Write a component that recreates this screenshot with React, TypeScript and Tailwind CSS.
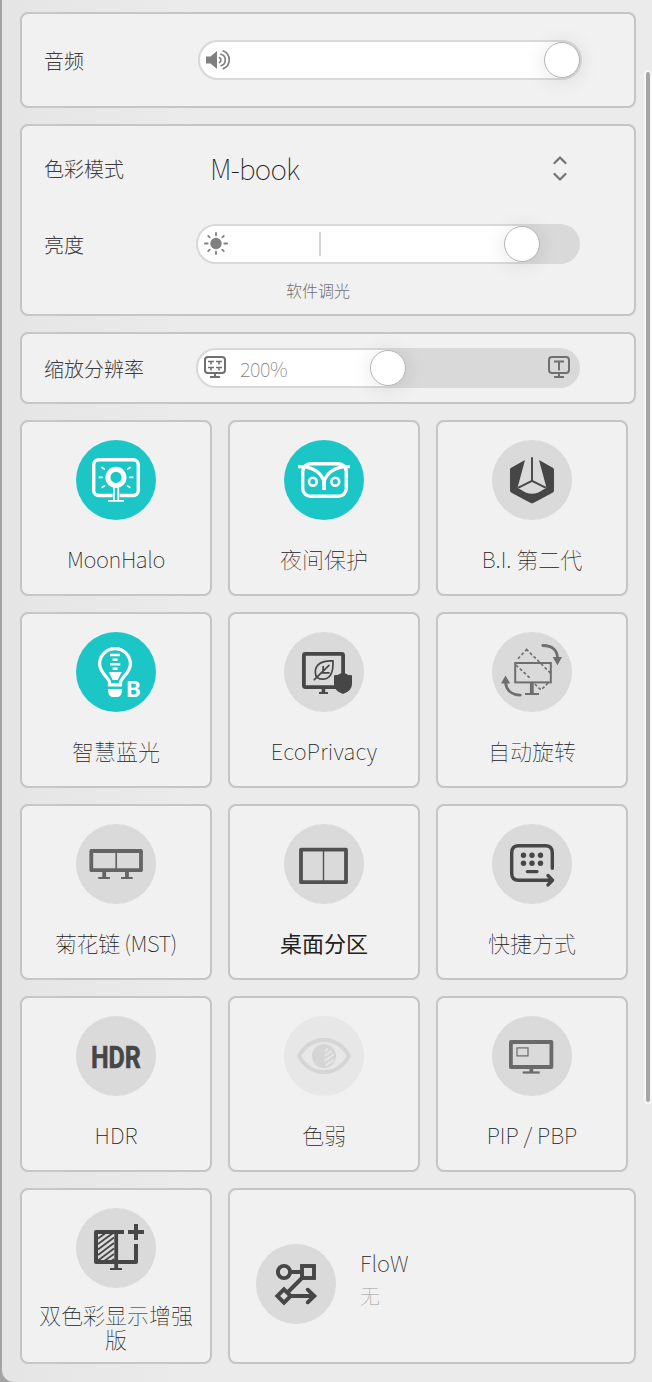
import type { ReactNode } from 'react'

interface Tile {
    label: string;
    icon: ReactNode;
    active?: boolean;
    disabled?: boolean;
    selected?: boolean;
    tracking?: string;
}

interface SliderProps {
    fill: number;
    children?: ReactNode;
}

const MoonHaloIcon = () => (
    <g fill="none" stroke="#fff" strokeLinecap="round">
        <rect x="17.7" y="19.7" width="44.6" height="35.8" rx="5" strokeWidth="3.4" />
        <path d="M40.1 47v13" stroke="#1dc6c6" strokeWidth="7" strokeLinecap="butt" />
        <path d="M37.9 47v13M42.3 47v13" strokeWidth="1.7" strokeLinecap="butt" />
        <circle cx="40" cy="37.4" r="8.1" strokeWidth="5" />
        <path d="M32.8 60.8h14.4" strokeWidth="1.8" />
        <path d="M23.3 37.4h2.8M53.9 37.4h2.8M25.9 27.5l2.4 1.5M54.1 27.5l-2.4 1.5M26.2 47.4l2.2-1.4M53.8 47.4l-2.2-1.4" strokeWidth="1.7" />
    </g>
)

const NightIcon = () => (
    <g fill="none" stroke="#fff">
        <rect x="18.7" y="23.7" width="43.6" height="32.6" rx="8" strokeWidth="3.4" />
        <path d="M14 26.7h6C30 28 38 33.5 40 42c2-8.5 10-14 20-15.3h6" strokeWidth="3.3" />
        <path d="M40 40v10" strokeWidth="3.8" />
        <circle cx="28.9" cy="41.7" r="3.9" strokeWidth="2.6" />
        <circle cx="51.3" cy="41.7" r="3.9" strokeWidth="2.6" />
    </g>
)

const BiIcon = () => (
    <g fill="#464646">
        <path d="M33 20 18.8 27.9Q18 28.4 18 29.5V50.5Q18 51.8 19 52.4L38.7 63Q40 63.7 41.3 63L61 52.4Q62 51.8 62 50.5V29.5Q62 28.4 61.2 27.9L47 20 54.5 48 51.5 49.5Q40 58 28.5 49.5L25.5 48Z" />
        <path d="M26 47.8 40 40.8 54 47.8M40 40.8V17.2" fill="none" stroke="#464646" strokeWidth="1.9" />
    </g>
)

const BlueLightIcon = () => (
    <g fill="#fff">
        <path d="M33.5 52.9V50.5C33.5 46 23.6 41 23.6 32a15.4 15.4 0 0 1 30.8 0C54.4 41 44.5 46 44.5 50.5V52.9Z" fill="none" stroke="#fff" strokeWidth="3.2" />
        <path d="M32 57h14v2.5q-1 5.5-5 5.5h-4q-4 0-5-5.5zM34 21.8h10v2.5H34zM36.6 26.4h5V29h-5zM34 31h10.3v2.5H34zM36.6 35.4h5V38h-5zM32.7 40h13l-4 8h-5z" />
        <text x="50.3" y="65" fontSize="22" fontWeight="700" textLength="14.5" lengthAdjust="spacingAndGlyphs" fontFamily="Roboto, sans-serif">B</text>
    </g>
)

const EcoIcon = () => (
    <g fill="none" stroke="#464646">
        <rect x="19.9" y="21.9" width="39.2" height="33.2" rx="1.5" strokeWidth="3.8" />
        <path d="M39.4 57v4" strokeWidth="3.6" />
        <path d="M35 61h9" strokeWidth="1.9" />
        <path d="M48.9 28.9C37.5 28 31.3 33 31.3 40c0 4.8 3 7.2 7.2 7.2C46 47.2 49.6 41 48.9 28.9Z" strokeWidth="1.7" />
        <path d="M30.3 47.6 45 33.4M39.2 34.5l-.3 5.5M37.5 40.8h7.5" strokeWidth="1.7" strokeLinecap="round" />
        <path d="M59 40.3q4.5 3 9 3V52q0 7-9 10-9-3-9-10v-8.7q4.5 0 9-3Z" fill="#464646" stroke="none" />
    </g>
)

const RotateIcon = () => (
    <g fill="none" stroke="#6e6e6e">
        <rect x="23.2" y="31" width="35.6" height="19.4" strokeWidth="2" />
        <path d="M39.8 51v10.5" strokeWidth="3.8" />
        <path d="M33 62h14" strokeWidth="2" />
        <path d="M34.7 17.5 24 28.8M34.7 17.5 59 41.5M24.5 33.5l14 13M43.3 52.5l5.7 5.5 7-7" strokeWidth="1.7" strokeDasharray="1.6 3.6" strokeLinecap="round" />
        <path d="M50.8 13.5C60 13.5 65.3 18 65.5 26M28.2 63.2C20 63 14.5 58.5 13.5 50.5" strokeWidth="2.8" strokeLinecap="round" />
        <path d="M60.7 25h9.4l-4.7 8.3zM9 51.5h9.2l-4.7-8z" fill="#6e6e6e" stroke="none" />
    </g>
)

const MstIcon = () => (
    <g fill="none" stroke="#646464">
        <rect x="15.3" y="27" width="49.7" height="19.2" strokeWidth="3.8" strokeLinejoin="round" />
        <path d="M40.2 27v20" strokeWidth="1.7" />
        <path d="M28.2 48v5M51 48v5" strokeWidth="3.8" />
        <path d="M22.3 54H34M45 54h11.7" strokeWidth="2" />
    </g>
)

const PartitionIcon = () => (
    <g fill="none" stroke="#505050">
        <rect x="17" y="25.7" width="45" height="32.5" strokeWidth="3.8" strokeLinejoin="round" />
        <path d="M39.5 25.5v33" strokeWidth="1.4" />
    </g>
)

const ShortcutIcon = () => (
    <g fill="none" stroke="#464646" strokeLinecap="round" strokeLinejoin="round" strokeWidth="3.4">
        <path d="M60.3 44.2V28.7q0-7-7-7H26.7q-7 0-7 7v20.5q0 7 7 7H60M56 51.5l4.5 4.7-4.5 4.7" />
        <path d="M35.3 47.6h9.7" strokeWidth="3.2" />
        <g fill="#464646" stroke="none">
            <circle cx="31.5" cy="31.3" r="2.7" />
            <circle cx="40" cy="31.3" r="2.7" />
            <circle cx="48.5" cy="31.3" r="2.7" />
            <circle cx="31.5" cy="39.2" r="2.7" />
            <circle cx="40" cy="39.2" r="2.7" />
            <circle cx="48.5" cy="39.2" r="2.7" />
        </g>
    </g>
)

const HdrIcon = () => (
    <text x="14.9" y="52" fontSize="31" fontWeight="700" fill="#464646" stroke="#464646" strokeWidth="0.6" textLength="50" lengthAdjust="spacingAndGlyphs" fontFamily="Roboto, sans-serif">HDR</text>
)

const EyeIcon = () => (
    <g fill="none" stroke="#d5d5d5">
        <path d="M15 40Q24 24 40 24T65 40Q56 56 40 56T15 40Z" strokeWidth="3.8" strokeLinejoin="round" />
        <circle cx="40" cy="40" r="12" fill="#d5d5d5" stroke="none" />
        <path d="M40.5 35 44 32.5M40.5 40l7-5M40.5 45l9-6.5M41.5 49.5l8-5.5" stroke="#e7e7e7" strokeWidth="1.8" />
    </g>
)

const PipIcon = () => (
    <g fill="none" stroke="#6a6a6a">
        <rect x="18.9" y="26" width="40.5" height="25" strokeWidth="3.8" strokeLinejoin="round" />
        <rect x="25" y="31.9" width="11" height="8" strokeWidth="1.2" />
        <path d="M39.3 53v3" strokeWidth="3.8" />
        <path d="M30.7 56.5h17" strokeWidth="2.2" />
    </g>
)

const DualColorIcon = () => (
    <g fill="none" stroke="#464646" strokeWidth="4">
        <path d="M48 24H20V54H60V36" strokeLinejoin="round" />
        <path d="M40.2 22v39" strokeWidth="3.8" />
        <path d="M34 61h12" strokeWidth="2" />
        <path d="M52 24h16M60 16v16" />
        <path d="M22 30.5l7-5M22 36l15-11M22 41.5l16-12M22 47l16-12M22 52.5l16-12M27.5 53.5 38 46M34 54l4-3" strokeWidth="1.7" />
    </g>
)

const FlowIcon = () => (
    <g fill="none" stroke="#464646" strokeWidth="3.9">
        <circle cx="28" cy="28" r="6.1" />
        <rect x="46" y="22" width="12" height="12" />
        <path d="M34 28h11M46 34 32 48" />
        <path d="M28 45.3 34.7 52 28 58.7 21.3 52Z" />
        <path d="M35 52h22M51.7 45.7 58.3 52l-6.6 6.3" strokeLinecap="round" />
    </g>
)

const tiles: Tile[] = [
    { label: 'MoonHalo', icon: <MoonHaloIcon />, active: true, tracking: 'tracking-[-0.4px]' },
    { label: '夜间保护', icon: <NightIcon />, active: true },
    { label: 'B.I. 第二代', icon: <BiIcon /> },
    { label: '智慧蓝光', icon: <BlueLightIcon />, active: true },
    { label: 'EcoPrivacy', icon: <EcoIcon />, tracking: 'tracking-[0.2px]' },
    { label: '自动旋转', icon: <RotateIcon /> },
    { label: '菊花链 (MST)', icon: <MstIcon />, tracking: 'tracking-[-0.4px]' },
    { label: '桌面分区', icon: <PartitionIcon />, selected: true },
    { label: '快捷方式', icon: <ShortcutIcon /> },
    { label: 'HDR', icon: <HdrIcon /> },
    { label: '色弱', icon: <EyeIcon />, disabled: true },
    { label: 'PIP / PBP', icon: <PipIcon /> },
    { label: '双色彩显示增强版', icon: <DualColorIcon /> },
];

const IconCircle = ({ active, disabled, children }: { active?: boolean; disabled?: boolean; children: ReactNode }) => (
    <div className={`size-20 shrink-0 rounded-full ${active ? 'bg-[#1dc6c6]' : disabled ? 'bg-[#e7e7e7]' : 'bg-[#dadada]'}`}>
        <svg viewBox="0 0 80 80" className="size-20">{children}</svg>
    </div>
)

const Slider = ({ fill, children }: SliderProps) => (
    <div className="relative h-10 w-96 shrink-0 rounded-full bg-[#d9d9d9]">
        <div className="absolute inset-y-0 left-0 rounded-l-full border-2 border-r-0 border-[#d9d9d9] bg-white" style={{ width: fill }} />
        <div
            className="absolute top-0.5 size-9 rounded-full border border-[#b4b4b4] bg-white shadow-[0_2px_22px_rgba(0,0,0,0.11)]"
            style={{ left: fill - 18 }}
        />
        {children}
    </div>
)

const MonitorGlyph = ({ children }: { children: ReactNode }) => (
    <svg viewBox="0 0 24 24" className="mb-0.5 size-6" fill="none" stroke="#707070" strokeWidth="2">
        <rect x="2" y="2" width="20" height="16" rx="3" />
        <path d="M12 18v4M7 22h10" />
        {children}
    </svg>
)

const App = () => {
    return (
        <div className="flex h-[1382px] w-[652px] overflow-hidden bg-[#a4a4a4] font-['Noto_Sans_CJK_SC',sans-serif] font-light text-[#3c3c3c]">
            <div className="ml-0.5 flex flex-1 rounded-bl-xl bg-linear-to-r from-[#e5e5e5] to-[#ebebeb] to-30% pl-[18px] pt-3">
                <div className="flex w-[616px] flex-col gap-4">
                    <div className="flex h-24 shrink-0 items-center rounded-lg border-2 border-[#c5c5c5] bg-[#f1f1f1] pl-[22px]">
                        <span className="w-[154px] pt-0.5 text-xl">音频</span>
                        <Slider fill={364}>
                            <svg viewBox="0 0 26 22" className="absolute left-2 top-[9px] h-[22px] w-[26px]" fill="none" stroke="#808080" strokeWidth="1.7" strokeLinecap="round">
                                <path d="M0 7.5h4.5L11 2v18L4.5 14.5H0z" fill="#808080" stroke="none" />
                                <path d="M13.5 8.7a2.7 2.7 0 0 1 0 4.8M15 5.2a6 6 0 0 1 0 11.5M17.3 2a9.5 9.5 0 0 1 0 17.6" />
                            </svg>
                        </Slider>
                    </div>

                    <div className="h-48 shrink-0 rounded-lg border-2 border-[#c5c5c5] bg-[#f1f1f1] pl-[22px]">
                        <div className="flex h-[84px] items-center pt-0.5">
                            <span className="w-[166px] text-xl">色彩模式</span>
                            <span className="w-[343px] pb-0.5 text-[28px] font-thin tracking-[-0.8px] text-[#202020]">M-book</span>
                            <svg viewBox="0 0 14 26" className="h-[26px] w-3.5" fill="none" stroke="#737373" strokeWidth="2.2" strokeLinecap="round" strokeLinejoin="round">
                                <path d="M1.5 7 7 1.5 12.5 7M1.5 18 7 23.5l5.5-5.5" />
                            </svg>
                        </div>
                        <div className="flex h-[68px] items-center">
                            <span className="w-[152px] pt-0.5 text-xl">亮度</span>
                            <Slider fill={326}>
                                <svg viewBox="0 0 24 24" className="absolute left-2 top-2 size-6" fill="none" stroke="#808080" strokeWidth="1.8" strokeLinecap="round">
                                    <circle cx="12" cy="11.5" r="5.7" fill="#808080" stroke="none" />
                                    <path d="M12 1v2.3M12 19.7V22M.9 11.5h2.8M20.3 11.5h2.8M4.2 3.8l1.5 1.5M18.3 17.7l1.5 1.5M4.2 19.2l1.5-1.5M18.3 5.3l1.5-1.5" />
                                </svg>
                                <div className="absolute left-[123px] top-2 h-6 w-0.5 bg-[#d4d4d4]" />
                            </Slider>
                        </div>
                        <p className="ml-[242px] text-base leading-6 text-[#707070]">软件调光</p>
                    </div>

                    <div className="flex h-[72px] shrink-0 items-center rounded-lg border-2 border-[#c5c5c5] bg-[#f1f1f1] pl-[22px]">
                        <span className="w-[152px] pt-0.5 text-xl">缩放分辨率</span>
                        <Slider fill={192}>
                            <div className="absolute inset-y-0 left-[7px] right-[9px] flex items-center justify-between">
                                <MonitorGlyph>
                                    <path d="M5 6.5h6M13 6.5h6M5 12.5h6M13 12.5h6" strokeWidth="1.4" />
                                    <path d="M8 6v3.5M16 6v3.5M8 12v3.5M16 12v3.5" strokeWidth="1.6" />
                                </MonitorGlyph>
                                <span className="ml-[13px] flex-1 pt-0.5 text-xl font-thin tracking-[-0.4px] text-[#808080]">200%</span>
                                <MonitorGlyph>
                                    <path d="M7 6.5h10M12 6.5v9" />
                                </MonitorGlyph>
                            </div>
                        </Slider>
                    </div>

                    <div className="grid grid-cols-[192px_192px_192px] gap-4">
                        {tiles.map((t) => (
                            <div key={t.label} className="flex h-44 flex-col items-center rounded-lg border-2 border-[#c5c5c5] bg-[#f1f1f1] px-4 pt-[18px]">
                                <IconCircle active={t.active} disabled={t.disabled}>{t.icon}</IconCircle>
                                <div className="mt-1.5 flex h-16 shrink-0 items-center">
                                    <span className={`text-center text-[22px] leading-6 ${t.tracking ?? ''} ${t.selected ? 'font-normal text-[#222222]' : 'font-thin text-[#202020]'}`}>
                                        {t.label}
                                    </span>
                                </div>
                            </div>
                        ))}
                        <div className="flex h-44 w-[408px] items-center rounded-lg border-2 border-[#c5c5c5] bg-[#f1f1f1] pl-[26px] pt-4">
                            <IconCircle><FlowIcon /></IconCircle>
                            <div className="-mt-2.5 ml-6 font-thin">
                                <p className="text-[22px] leading-8 text-[#202020]">FloW</p>
                                <p className="mt-0.5 text-xl leading-8 text-[#a0a0a0]">无</p>
                            </div>
                        </div>
                    </div>
                </div>
                <div className="ml-2 mt-[58px] h-[1034px] w-2 rounded-full border-2 border-[#f7f7f7] bg-[#a5a5a5]" />
            </div>
        </div>
    )
}

export default App
